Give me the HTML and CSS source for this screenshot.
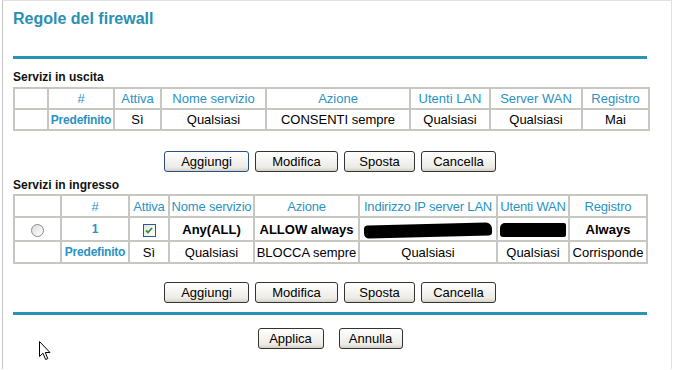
FILE: index.html
```html
<!DOCTYPE html>
<html lang="it">

<head>
    <meta charset="UTF-8">
    <title>Regole del firewall</title>
    <link rel="stylesheet" href="styles.css">
</head>

<body>
    <div class="frame">
        <h1 class="title">Regole del firewall</h1>
        <div class="rule rule-top"></div>

        <div class="section-label">Servizi in uscita</div>
        <table class="rules">
            <colgroup>
                <col style="width:34px"><col style="width:66px"><col style="width:47px"><col style="width:105px">
                <col style="width:144px"><col style="width:80px"><col style="width:92px"><col style="width:67px">
            </colgroup>
            <tr class="head">
                <td></td>
                <td>#</td>
                <td>Attiva</td>
                <td>Nome servizio</td>
                <td>Azione</td>
                <td>Utenti LAN</td>
                <td>Server WAN</td>
                <td>Registro</td>
            </tr>
            <tr>
                <td></td>
                <td class="link">Predefinito</td>
                <td>Sì</td>
                <td>Qualsiasi</td>
                <td>CONSENTI sempre</td>
                <td>Qualsiasi</td>
                <td>Qualsiasi</td>
                <td>Mai</td>
            </tr>
        </table>

        <div class="btn-row">
            <button class="btn default btn-add">Aggiungi</button>
            <button class="btn btn-edit">Modifica</button>
            <button class="btn btn-move">Sposta</button>
            <button class="btn btn-del">Cancella</button>
        </div>

        <div class="section-label second">Servizi in ingresso</div>
        <table class="rules incoming">
            <colgroup>
                <col style="width:47px"><col style="width:68px"><col style="width:40px"><col style="width:85px">
                <col style="width:105px"><col style="width:138px"><col style="width:72px"><col style="width:78px">
            </colgroup>
            <tr class="head">
                <td></td>
                <td>#</td>
                <td>Attiva</td>
                <td>Nome servizio</td>
                <td>Azione</td>
                <td>Indirizzo IP server LAN</td>
                <td>Utenti WAN</td>
                <td>Registro</td>
            </tr>
            <tr class="entry">
                <td><span class="radio"></span></td>
                <td class="link">1</td>
                <td>
                    <span class="check">
                        <svg width="8" height="7" viewBox="0 0 8 7"><path d="M1 3.5 L3 5.5 L7 1" fill="none" stroke="#2d9a2d" stroke-width="1.8"/></svg>
                    </span>
                </td>
                <td>Any(ALL)</td>
                <td>ALLOW always</td>
                <td><span class="blot blot-ip"></span></td>
                <td><span class="blot blot-wan"></span></td>
                <td>Always</td>
            </tr>
            <tr class="last">
                <td></td>
                <td class="link">Predefinito</td>
                <td>Sì</td>
                <td>Qualsiasi</td>
                <td>BLOCCA sempre</td>
                <td>Qualsiasi</td>
                <td>Qualsiasi</td>
                <td>Corrisponde</td>
            </tr>
        </table>

        <div class="btn-row second-row">
            <button class="btn btn-add">Aggiungi</button>
            <button class="btn btn-edit">Modifica</button>
            <button class="btn btn-move">Sposta</button>
            <button class="btn btn-del">Cancella</button>
        </div>

        <div class="rule rule-bottom"></div>

        <div class="btn-row apply-row">
            <button class="btn btn-apply">Applica</button>
            <button class="btn btn-cancel">Annulla</button>
        </div>

        <!-- mouse pointer left on the page -->
        <svg class="cursor" width="13" height="20" viewBox="0 0 13 20">
            <path d="M0.5 0.5 L0.5 15.5 L4 12.2 L6.6 18.5 L8.8 17.6 L6.3 11.5 L11 11.5 Z" fill="#fff" stroke="#000" stroke-width="1"/>
        </svg>
    </div>
</body>

</html>
```

FILE: styles.css
```css
body {
    margin: 0;
    padding: 0;
    background-color: #ffffff;
    font-family: "Liberation Sans", Arial, sans-serif;
    color: #000;
}

.frame {
    position: relative;
    width: 670px;
    height: 369px;
    margin-left: 2px;
    border-top: 1px solid #e2e2e2;
    border-left: 1px solid #c4c4c4;
    border-right: 1px solid #e0e0e0;
    padding: 0 24px 0 10px;
    box-sizing: border-box;
    overflow: hidden;
}

.title {
    margin: 0;
    padding-top: 8px;
    font-size: 16px;
    line-height: 20px;
    font-weight: bold;
    color: #2a8fb4;
}

.rule {
    height: 3px;
    background-color: #2a93b5;
}

.rule-top {
    margin-top: 27px;
}

.section-label {
    margin-top: 11px;
    font-size: 12px;
    line-height: 14px;
    font-weight: bold;
    color: #111;
}

.section-label.second {
    margin-top: 6px;
}

.rules {
    border-collapse: collapse;
    table-layout: fixed;
    width: 635px;
    margin-top: 3px;
    font-size: 13px;
}

.rules td {
    border: 2px solid #c8c6c0;
    height: 19px;
    padding: 0;
    text-align: center;
    white-space: nowrap;
}

.rules .head td {
    color: #2a93c2;
}

.rules .link {
    color: #2a93c2;
    font-weight: bold;
    font-size: 12px;
    letter-spacing: -0.2px;
}

.incoming {
    width: 633px;
    margin-top: 2px;
}

.incoming .head td {
    height: 20px;
    letter-spacing: -0.2px;
}

.incoming .entry td {
    height: 22px;
    font-weight: bold;
}

.incoming .last td {
    height: 20px;
}

.radio {
    display: inline-block;
    width: 11px;
    height: 11px;
    border: 1px solid #8a8a8a;
    border-radius: 50%;
    background: linear-gradient(135deg, #dcdcdc, #ffffff);
    vertical-align: middle;
}

.check {
    display: inline-flex;
    align-items: center;
    justify-content: center;
    width: 11px;
    height: 11px;
    border: 1px solid #2c5d8a;
    background: linear-gradient(135deg, #e4e4e0, #ffffff);
    vertical-align: middle;
}

.blot {
    display: inline-block;
    height: 13px;
    background-color: #000;
    vertical-align: middle;
    border-radius: 4px 6px 3px 5px;
}

.blot-ip {
    width: 128px;
    transform: rotate(-1.5deg);
}

.blot-wan {
    width: 66px;
    height: 14px;
    border-radius: 5px 2px 2px 3px;
}

.btn-row {
    display: flex;
    justify-content: center;
    gap: 6px;
    margin-top: 20px;
}

.btn-row.second-row {
    margin-top: 18px;
}

.apply-row {
    gap: 15px;
    margin-top: 13px;
}

.btn {
    height: 21px;
    padding: 0;
    font-family: "Liberation Sans", Arial, sans-serif;
    font-size: 13px;
    color: #000;
    background: linear-gradient(#ffffff, #ecebe6 80%, #d6d0c5);
    border: 1px solid #333333;
    border-radius: 3px;
}

.btn.default {
    border-color: #2a4f80;
}

.btn-add { width: 85px; }
.btn-edit { width: 83px; }
.btn-move { width: 71px; }
.btn-del { width: 75px; }
.btn-apply { width: 66px; }
.btn-cancel { width: 64px; }

.rule-bottom {
    margin-top: 9px;
}

.cursor {
    position: absolute;
    left: 36px;
    top: 340px;
}
```
